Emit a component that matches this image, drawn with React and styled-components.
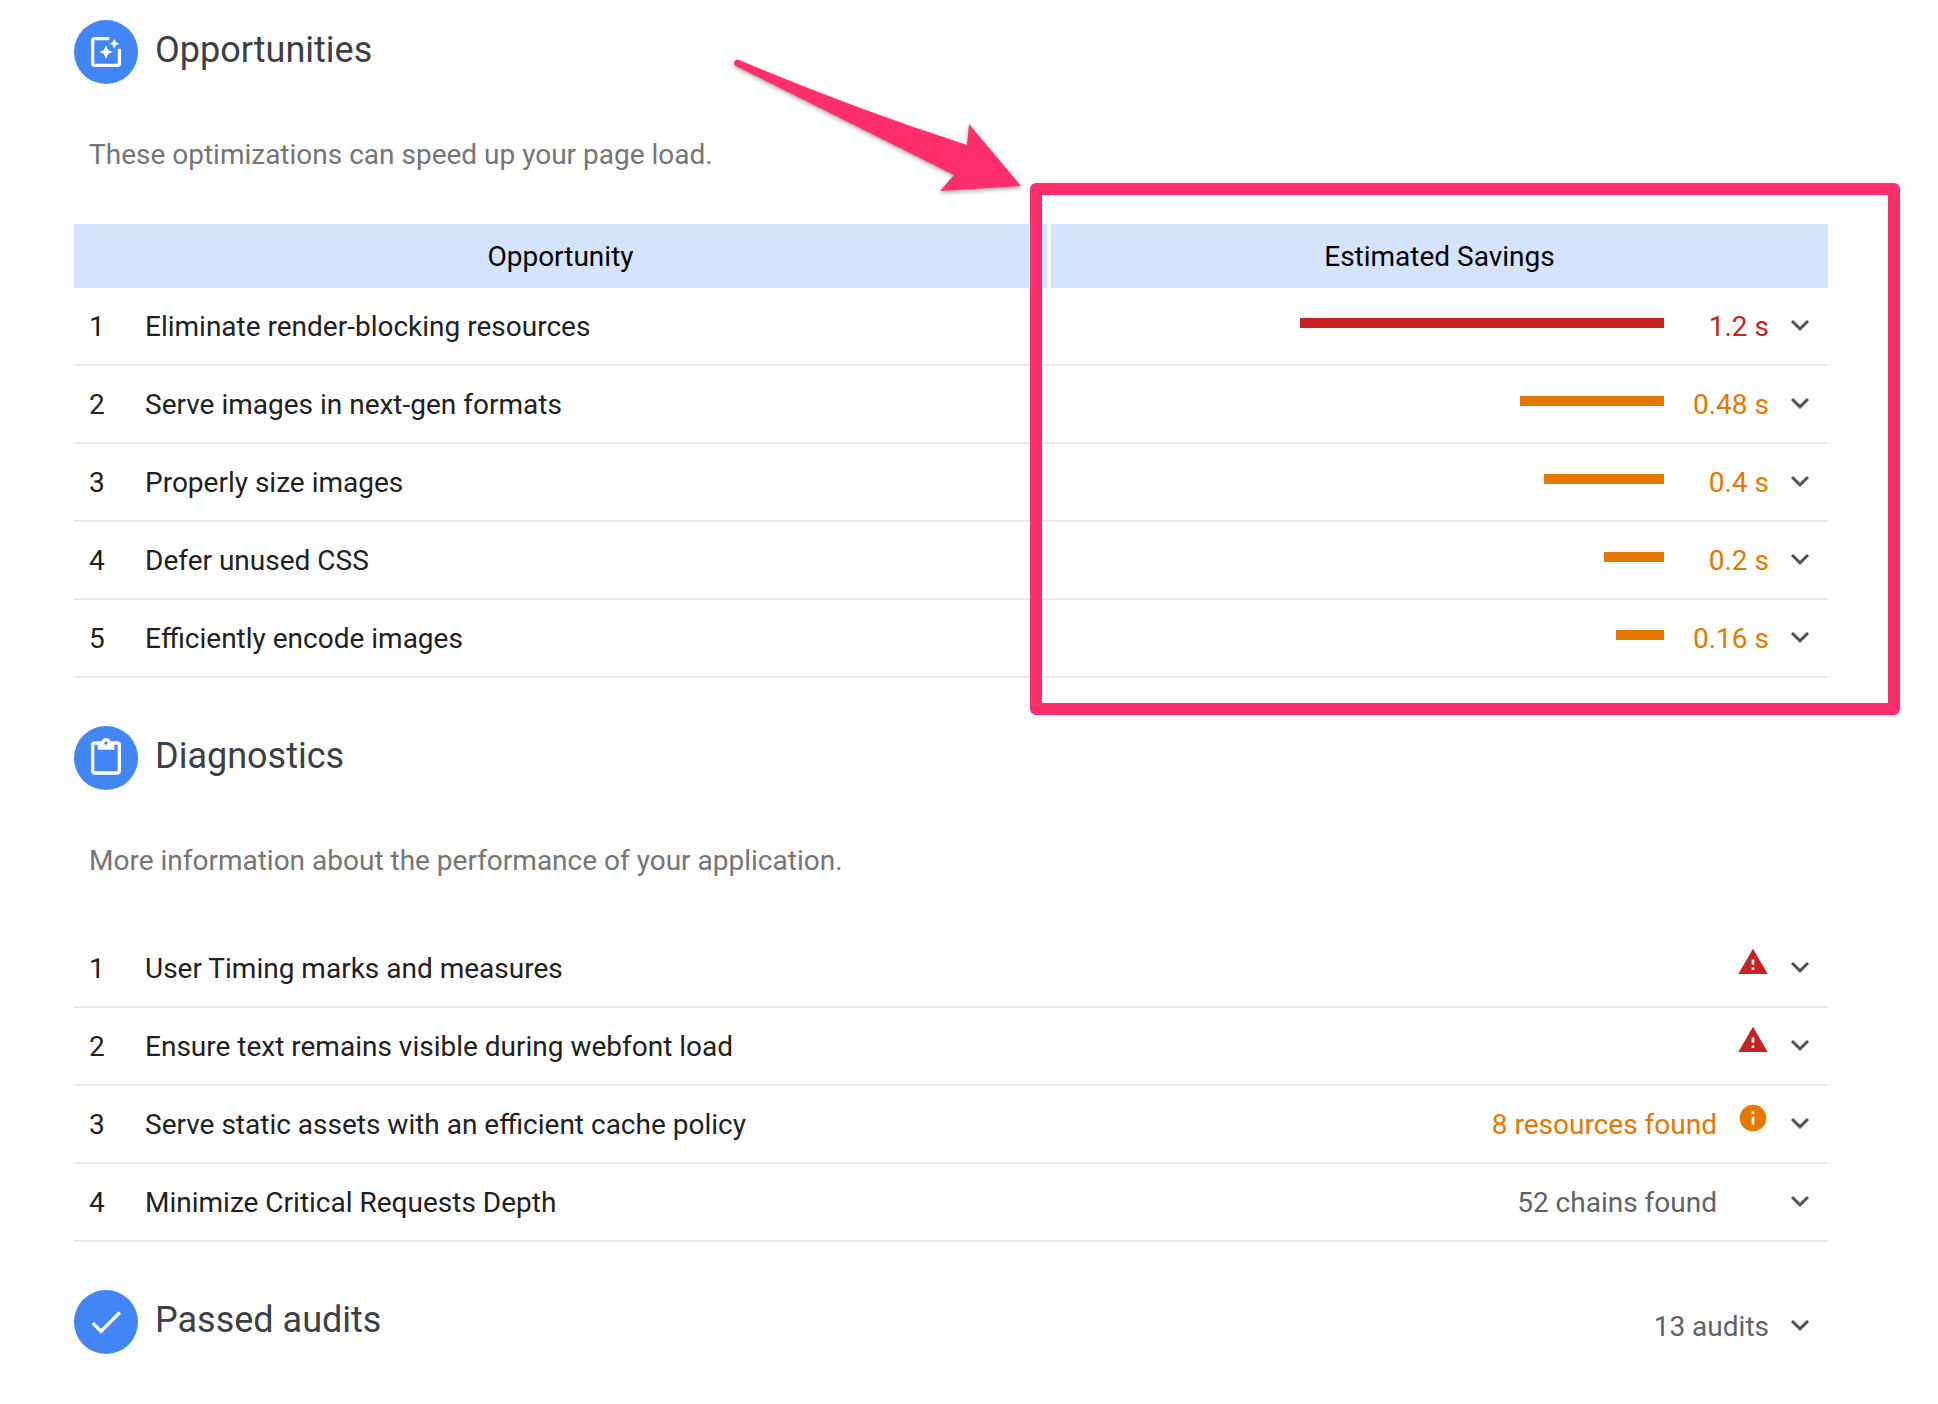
import React from "react";
import styled, { createGlobalStyle } from "styled-components";
import {
  MdCheck,
  MdContentPaste,
  MdExpandMore,
  MdInfo,
  MdPhotoFilter,
  MdWarning,
} from "react-icons/md";

const colors = {
  fail: "#c7221f",
  average: "#e67700",
  muted: "#5f6368",
};

const opportunities = [
  { title: "Eliminate render-blocking resources", ms: 1213, label: "1.2 s", level: "fail" },
  { title: "Serve images in next-gen formats", ms: 480, label: "0.48 s", level: "average" },
  { title: "Properly size images", ms: 400, label: "0.4 s", level: "average" },
  { title: "Defer unused CSS", ms: 200, label: "0.2 s", level: "average" },
  { title: "Efficiently encode images", ms: 160, label: "0.16 s", level: "average" },
];

const diagnostics = [
  { title: "User Timing marks and measures", level: "fail" },
  { title: "Ensure text remains visible during webfont load", level: "fail" },
  {
    title: "Serve static assets with an efficient cache policy",
    label: "8 resources found",
    level: "average",
  },
  { title: "Minimize Critical Requests Depth", label: "52 chains found", level: "muted" },
];

const maxMs = Math.max(...opportunities.map((item) => item.ms));

const Expand = ({ title }) => (
  <Toggle type="button" aria-label={`Show details: ${title}`}>
    <MdExpandMore size={36} />
  </Toggle>
);

const SectionHeader = ({ icon, title, children }) => (
  <Header>
    <Badge>{icon}</Badge>
    <Heading>{title}</Heading>
    {children}
  </Header>
);

const Callout = () => (
  <CalloutBox>
    <Arrow viewBox="0 0 320 150" aria-hidden="true">
      <path d="M17 15 Q131 63 245 100 L247 79 L299 141 L218 146 L232 130 L14 21 A3 3 0 0 1 17 15 Z" />
    </Arrow>
  </CalloutBox>
);

const App = () => {
  return (
    <Page>
      <GlobalStyle />

      <Section>
        <SectionHeader icon={<MdPhotoFilter size={40} />} title="Opportunities" />
        <Description>These optimizations can speed up your page load.</Description>
        <TableWrap>
          <Table>
            <colgroup>
              <IndexCol />
              <col />
              <SavingsCol />
            </colgroup>
            <thead>
              <tr>
                <Th colSpan={2}>Opportunity</Th>
                <Th>Estimated Savings</Th>
              </tr>
            </thead>
            <tbody>
              {opportunities.map((item, index) => (
                <tr key={item.title}>
                  <Td $indent>{index + 1}</Td>
                  <Td>{item.title}</Td>
                  <Td>
                    <Savings>
                      <Track>
                        <Bar $level={item.level} style={{ width: `${(item.ms / maxMs) * 100}%` }} />
                      </Track>
                      <Time $level={item.level}>{item.label}</Time>
                      <Expand title={item.title} />
                    </Savings>
                  </Td>
                </tr>
              ))}
            </tbody>
          </Table>
          <Callout />
        </TableWrap>
      </Section>

      <Section>
        <SectionHeader icon={<MdContentPaste size={40} />} title="Diagnostics" />
        <Description>More information about the performance of your application.</Description>
        <List>
          {diagnostics.map((item, index) => (
            <Row key={item.title}>
              <Index>{index + 1}</Index>
              <Title>{item.title}</Title>
              {item.label && <Value $level={item.level}>{item.label}</Value>}
              <Status $level={item.level}>
                {item.level === "fail" && <MdWarning size={32} />}
                {item.level === "average" && <MdInfo size={32} />}
              </Status>
              <Expand title={item.title} />
            </Row>
          ))}
        </List>
      </Section>

      <Section>
        <SectionHeader icon={<MdCheck size={40} />} title="Passed audits">
          <Summary>
            <Value $level="muted">13 audits</Value>
            <Expand title="Passed audits" />
          </Summary>
        </SectionHeader>
      </Section>
    </Page>
  );
};

export default App;

// Styled Components
const GlobalStyle = createGlobalStyle`
  * {
    box-sizing: border-box;
  }

  body {
    margin: 0;
    background-color: #ffffff;
    font-family: Roboto, "Liberation Sans", sans-serif;
    font-size: 28px;
    line-height: 40px;
    color: #212121;
  }
`;

const Page = styled.main`
  display: flex;
  flex-direction: column;
  gap: 48px;
  padding: 20px 110px 40px 74px;
`;

const Section = styled.section`
  min-width: 0;
`;

const Header = styled.header`
  display: flex;
  align-items: flex-start;
  gap: 17px;
`;

const Badge = styled.span`
  display: flex;
  align-items: center;
  justify-content: center;
  flex: none;
  width: 64px;
  height: 64px;
  border-radius: 50%;
  background-color: #4285f4;
  color: #ffffff;
`;

const Heading = styled.h2`
  flex: 1;
  margin: 0;
  font-size: 36px;
  font-weight: 400;
  line-height: 60px;
  color: #3c4043;
`;

const Description = styled.p`
  margin: 51px 0 49px;
  padding-left: 15px;
  color: #757575;
`;

const TableWrap = styled.div`
  position: relative;
`;

const Table = styled.table`
  width: 100%;
  table-layout: fixed;
  border-collapse: separate;
  border-spacing: 0;
`;

const IndexCol = styled.col`
  width: 71px;
`;

const SavingsCol = styled.col`
  width: 44.3%;
`;

const Th = styled.th`
  height: 64px;
  padding: 2px 0 0;
  font-weight: 400;
  color: #000000;
  background-color: #d5e4fd;

  &:first-child {
    border-right: 4px solid #ffffff;
  }
`;

const Td = styled.td`
  height: 78px;
  padding: 2px 0 0 ${({ $indent }) => ($indent ? "15px" : "0")};
  border-bottom: 2px solid #ebebeb;
`;

const Savings = styled.div`
  display: flex;
  align-items: center;
  justify-content: flex-end;
  padding-right: 10px;
`;

const Track = styled.div`
  display: flex;
  justify-content: flex-end;
  width: 364px;
  padding-bottom: 8px;
`;

const Bar = styled.div`
  height: 10px;
  background-color: ${({ $level }) => colors[$level]};
`;

const Value = styled.span`
  color: ${({ $level }) => colors[$level]};
`;

const Time = styled(Value)`
  width: 105px;
  text-align: right;
`;

const Toggle = styled.button`
  display: flex;
  flex: none;
  margin: 0 0 0 13px;
  padding: 0 0 4px;
  border: none;
  background: none;
  color: #50535a;
  cursor: pointer;
`;

const List = styled.ol`
  margin: 0;
  padding: 0;
  list-style: none;
`;

const Row = styled.li`
  display: flex;
  align-items: center;
  height: 78px;
  padding: 2px 10px 0 15px;
  border-bottom: 2px solid #ebebeb;
`;

const Index = styled.span`
  width: 56px;
`;

const Title = styled.span`
  flex: 1;
`;

const Status = styled.span`
  display: flex;
  width: 32px;
  margin-left: 20px;
  padding-bottom: 14px;
  color: ${({ $level }) => colors[$level]};
`;

const Summary = styled.div`
  display: flex;
  align-items: center;
  height: 74px;
  padding-right: 10px;
`;

const CalloutBox = styled.div`
  position: absolute;
  top: -41px;
  right: -72px;
  bottom: -37px;
  left: 54.5%;
  border: 12px solid #ff2f6e;
  border-radius: 6px;
  pointer-events: none;
`;

const Arrow = styled.svg`
  position: absolute;
  right: 100%;
  bottom: 100%;
  width: 320px;
  height: 150px;
  fill: #ff2f6e;
  filter: drop-shadow(0 2px 2px rgba(0, 0, 0, 0.35));
`;
